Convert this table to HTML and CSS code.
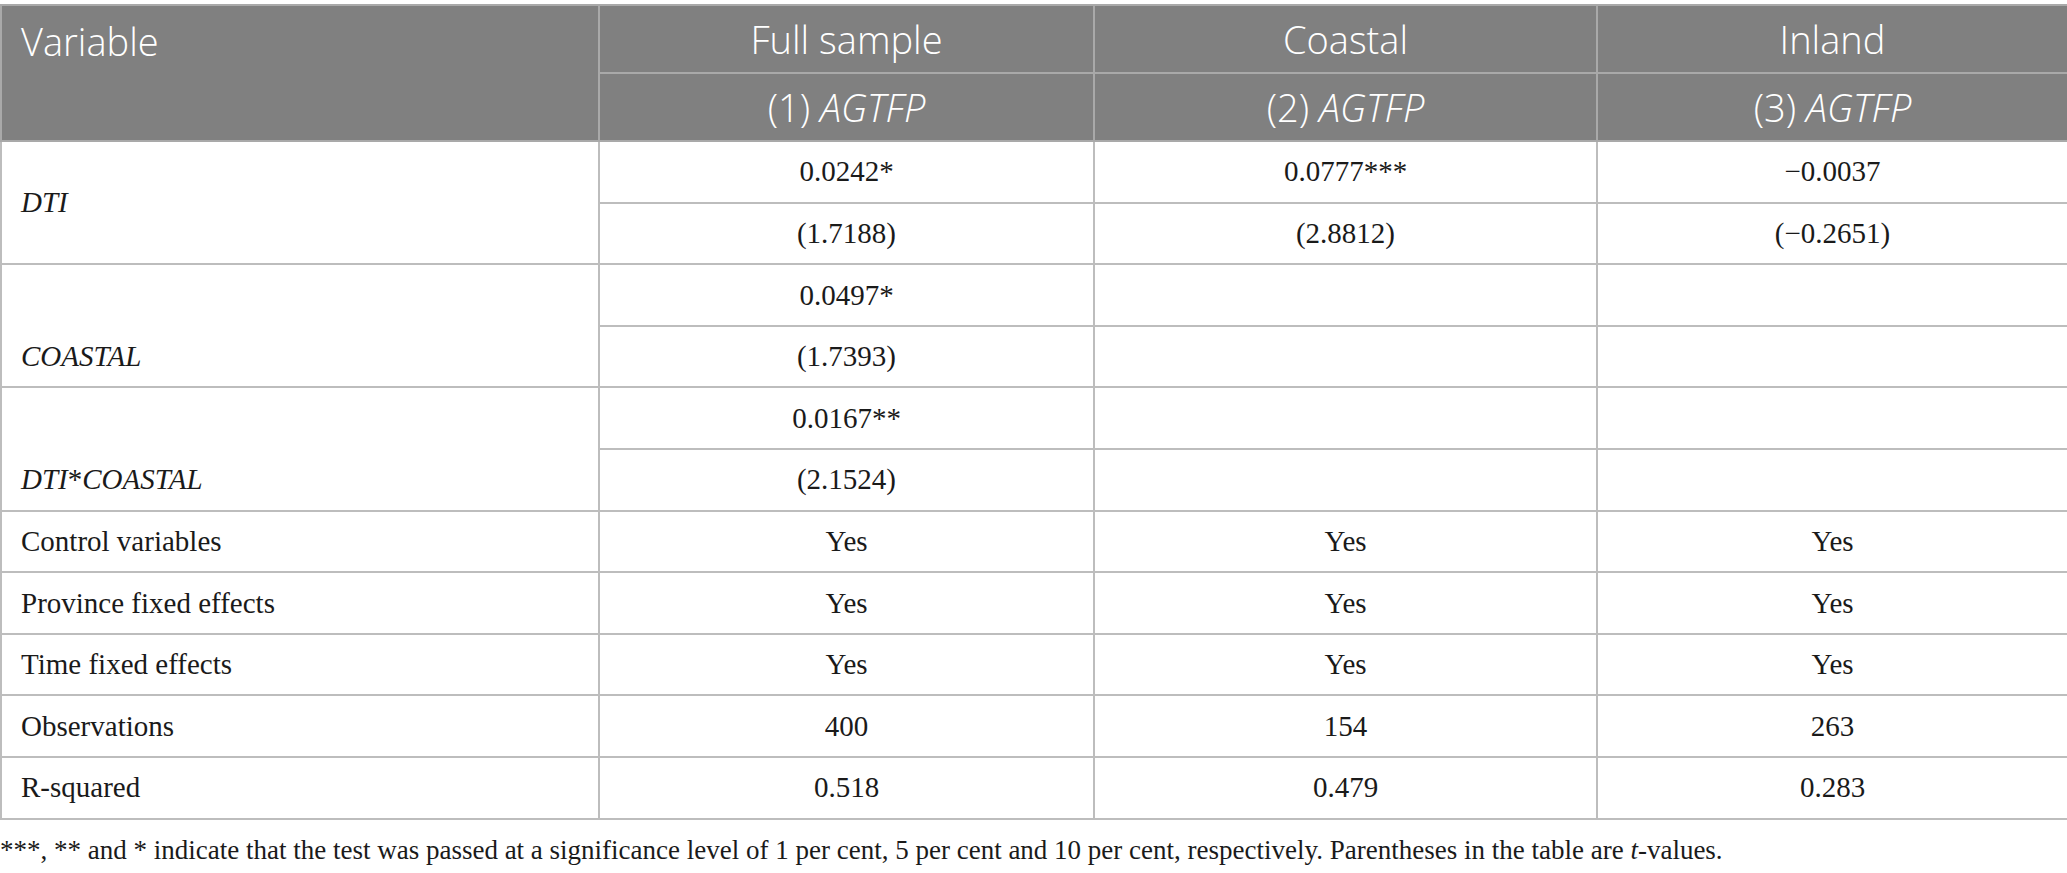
FILE: index.html
```html
<!DOCTYPE html>
<html lang="en">
<head>
<meta charset="utf-8">
<title>Table</title>
<link rel="stylesheet" href="styles.css">
</head>
<body>
<div class="wrap">
<table class="results">
  <colgroup>
    <col class="c-var">
    <col class="c-full">
    <col class="c-coast">
    <col class="c-inland">
  </colgroup>
  <thead>
    <tr>
      <th rowspan="2" class="h-var">Variable</th>
      <th>Full sample</th>
      <th>Coastal</th>
      <th>Inland</th>
    </tr>
    <tr>
      <th>(1) <i>AGTFP</i></th>
      <th>(2) <i>AGTFP</i></th>
      <th>(3) <i>AGTFP</i></th>
    </tr>
  </thead>
  <tbody>
    <tr>
      <td rowspan="2" class="lbl"><i>DTI</i></td>
      <td>0.0242*</td>
      <td>0.0777***</td>
      <td>−0.0037</td>
    </tr>
    <tr>
      <td>(1.7188)</td>
      <td>(2.8812)</td>
      <td>(−0.2651)</td>
    </tr>
    <tr>
      <td rowspan="2" class="lbl low"><i>COASTAL</i></td>
      <td>0.0497*</td>
      <td></td>
      <td></td>
    </tr>
    <tr>
      <td>(1.7393)</td>
      <td></td>
      <td></td>
    </tr>
    <tr>
      <td rowspan="2" class="lbl low"><i>DTI</i>*<i>COASTAL</i></td>
      <td>0.0167**</td>
      <td></td>
      <td></td>
    </tr>
    <tr>
      <td>(2.1524)</td>
      <td></td>
      <td></td>
    </tr>
    <tr>
      <td class="lbl">Control variables</td>
      <td>Yes</td>
      <td>Yes</td>
      <td>Yes</td>
    </tr>
    <tr>
      <td class="lbl">Province fixed effects</td>
      <td>Yes</td>
      <td>Yes</td>
      <td>Yes</td>
    </tr>
    <tr>
      <td class="lbl">Time fixed effects</td>
      <td>Yes</td>
      <td>Yes</td>
      <td>Yes</td>
    </tr>
    <tr>
      <td class="lbl">Observations</td>
      <td>400</td>
      <td>154</td>
      <td>263</td>
    </tr>
    <tr>
      <td class="lbl">R-squared</td>
      <td>0.518</td>
      <td>0.479</td>
      <td>0.283</td>
    </tr>
  </tbody>
</table>
<p class="note">***, ** and * indicate that the test was passed at a significance level of 1 per cent, 5 per cent and 10 per cent, respectively. Parentheses in the table are <i>t</i>-values.</p>
</div>
</body>
</html>
```
FILE: styles.css
```css
html, body {
  margin: 0;
  padding: 0;
  background: #ffffff;
}

.wrap {
  padding-top: 4px;
  width: 2067px;
}

.results {
  width: 2067px;
  border-collapse: collapse;
  table-layout: fixed;
  font-family: "Liberation Serif", "Times New Roman", serif;
  font-size: 29px;
  color: #1a1a1a;
}

.c-var { width: 598px; }
.c-full { width: 495px; }
.c-coast { width: 503px; }
.c-inland { width: 471px; }

.results th {
  background: #808080;
  color: #ffffff;
  font-family: "Open Sans", "Noto Sans", sans-serif;
  font-weight: 300;
  font-size: 38px;
  height: 66px;
  padding: 0;
  border: 2px solid #a9a9a9;
  text-align: center;
  vertical-align: middle;
  line-height: 1;
}

.results th.h-var {
  text-align: left;
  vertical-align: top;
  padding: 16px 0 0 19px;
}

.results td {
  height: 59.6px;
  padding: 0;
  border: 2px solid #bdbdbd;
  text-align: center;
  vertical-align: middle;
  line-height: 1.2;
}

.results td.lbl {
  text-align: left;
  padding-left: 19px;
}

.results td.lbl.low {
  vertical-align: bottom;
  padding-bottom: 13px;
}

.note {
  margin: 14px 0 0 0;
  font-family: "Liberation Serif", "Times New Roman", serif;
  font-size: 27px;
  color: #1a1a1a;
  line-height: 1.2;
}
```
